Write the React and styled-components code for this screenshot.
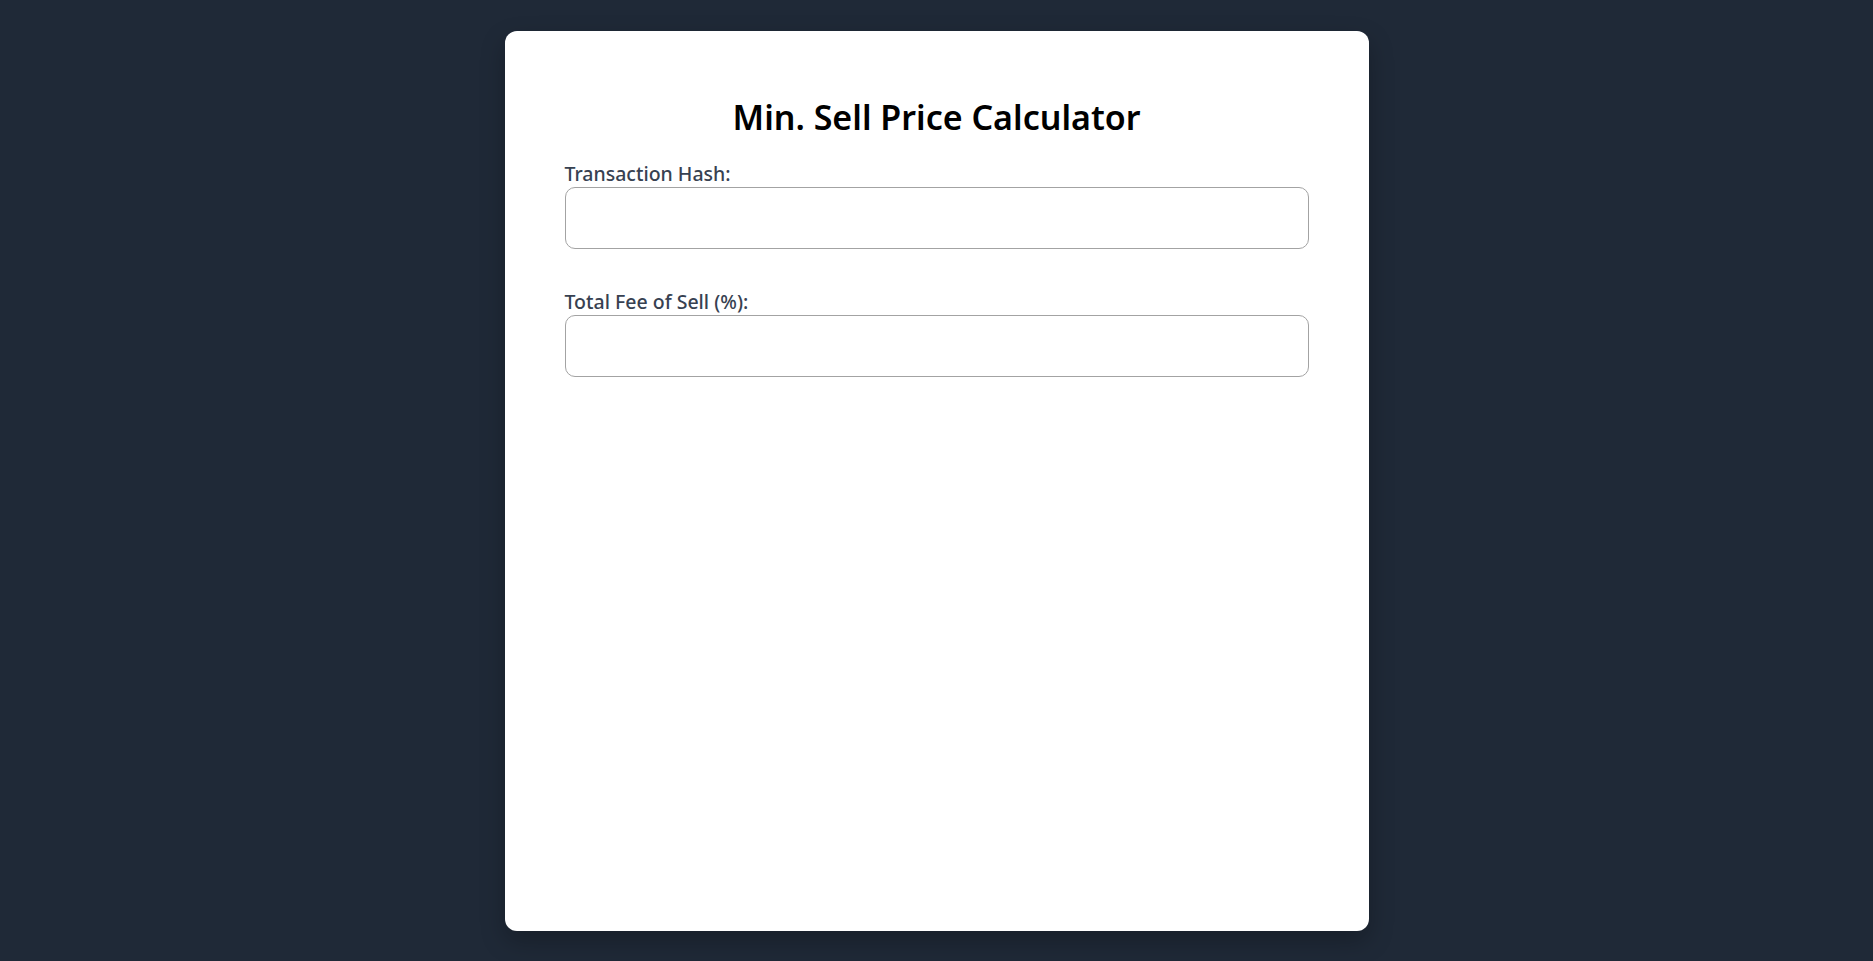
import React from 'react'
import styled, { createGlobalStyle } from 'styled-components'

const GlobalStyle = createGlobalStyle`
  html, body {
    margin: 0;
    padding: 0;
    background: #1f2937;
    font-family: "Noto Sans", "Open Sans", sans-serif;
  }
`

const Page = styled.div`
  min-height: 100vh;
  display: flex;
  justify-content: center;
  padding-top: 31px;
  box-sizing: border-box;
`

const Card = styled.div`
  width: 864px;
  height: 900px;
  box-sizing: border-box;
  background: #ffffff;
  border-radius: 12px;
  box-shadow: 0 10px 25px rgba(0, 0, 0, 0.25);
  padding: 63px 60px;
  display: flex;
  flex-direction: column;
`

const Title = styled.h1`
  margin: 0 0 20px;
  text-align: center;
  color: #000;
  font-size: 34px;
  font-weight: 600;
  line-height: 46px;
`

const Field = styled.div`
  display: flex;
  flex-direction: column;
  margin-bottom: 39px;
`

const Label = styled.label`
  color: #374151;
  font-size: 19.5px;
  font-weight: 500;
  line-height: 27px;
`

const Input = styled.input`
  height: 62px;
  box-sizing: border-box;
  border: 1px solid #a3a3a3;
  border-radius: 10px;
  padding: 0 16px;
  font-size: 18px;
  font-family: inherit;
  outline: none;
`

export default function App() {
  return (
    <>
      <GlobalStyle />
      <Page>
        <Card>
          <Title>Min. Sell Price Calculator</Title>
          <Field>
            <Label htmlFor="hash">Transaction Hash:</Label>
            <Input id="hash" type="text" />
          </Field>
          <Field>
            <Label htmlFor="fee">Total Fee of Sell (%):</Label>
            <Input id="fee" type="text" />
          </Field>
        </Card>
      </Page>
    </>
  )
}
